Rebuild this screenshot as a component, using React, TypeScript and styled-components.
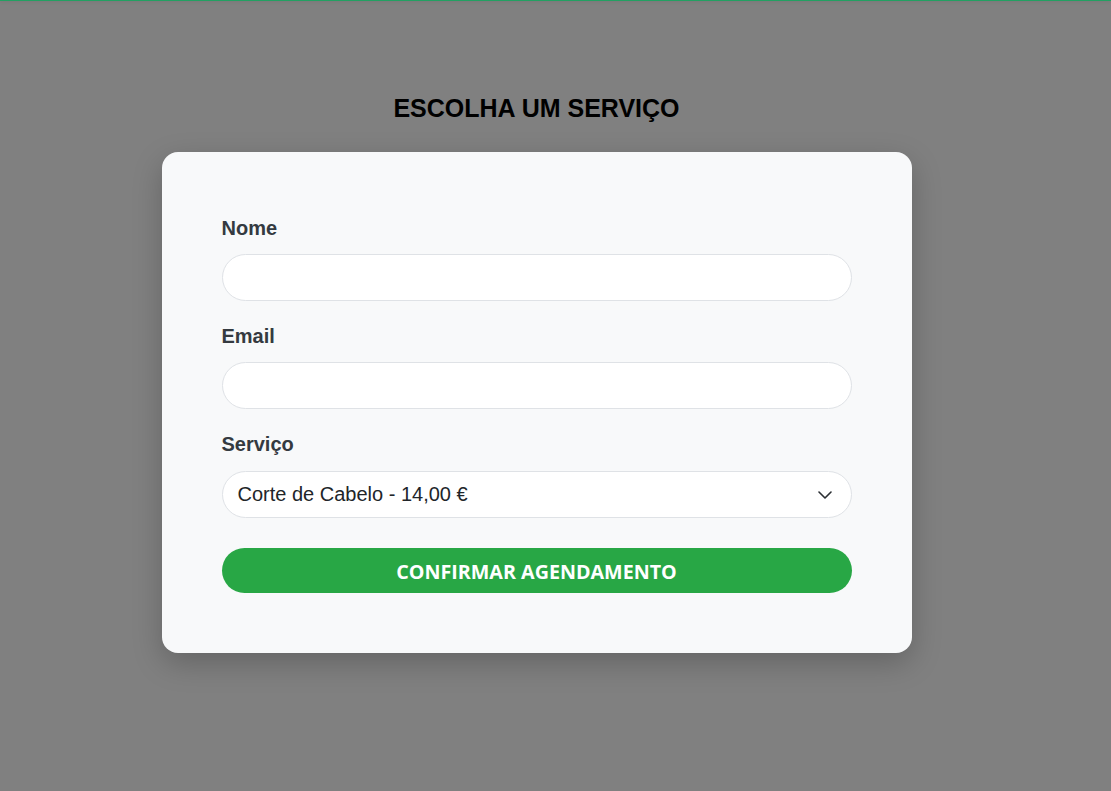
import React from "react";
import styled, { createGlobalStyle } from "styled-components";

const Global = createGlobalStyle`
  html, body { margin: 0; padding: 0; }
  body {
    background: #808080;
    font-family: "Liberation Sans", Arial, sans-serif;
    min-height: 791px;
  }
  * { box-sizing: border-box; }
`;

const TopLine = styled.div`
  height: 1px;
  background: #22a062;
  box-shadow: 0 1px 3px rgba(0, 0, 0, 0.12);
`;

const Page = styled.main`
  display: flex;
  flex-direction: column;
  align-items: center;
  padding-top: 93px;
  padding-right: 38px;
`;

const Title = styled.h2`
  margin: 0 0 30px;
  font-size: 25px;
  line-height: 28px;
  font-weight: 700;
  color: #000;
`;

const Card = styled.form`
  width: 750px;
  background: #f8f9fa;
  border-radius: 16px;
  padding: 64px 60px 60px;
  box-shadow: 0 10px 30px rgba(0, 0, 0, 0.22);
  display: flex;
  flex-direction: column;
  gap: 23px;
`;

const Field = styled.div`
  display: flex;
  flex-direction: column;
`;

const Label = styled.label`
  font-size: 20px;
  line-height: 24px;
  font-weight: 700;
  color: #343a40;
  margin-bottom: 14px;
`;

const Input = styled.input`
  height: 47px;
  width: 100%;
  border: 1px solid #dfe2e6;
  border-radius: 24px;
  background: #fff;
  padding: 0 16px;
  font-family: "Liberation Sans", Arial, sans-serif;
  font-size: 20px;
  color: #212529;
  outline: none;
`;

const SelectBox = styled.div`
  position: relative;
  height: 47px;
  margin-top: 1px;
  border: 1px solid #dfe2e6;
  border-radius: 24px;
  background: #fff;
  display: flex;
  align-items: center;
  justify-content: space-between;
  padding: 0 19px 0 15px;
  font-size: 20px;
  color: #212529;
`;

const Chevron = styled.svg`
  width: 14px;
  height: 8px;
  display: block;
`;

const Button = styled.button`
  margin-top: 7px;
  height: 45px;
  border: none;
  border-radius: 23px;
  background: #28a745;
  color: #fff;
  font-family: "Open Sans", "Segoe UI", sans-serif;
  font-weight: 700;
  font-size: 19.7px;
  padding-top: 2px;
  cursor: pointer;
`;

export default function App() {
  return (
    <>
      <Global />
      <TopLine />
      <Page>
        <Title>ESCOLHA UM SERVIÇO</Title>
        <Card onSubmit={(e) => e.preventDefault()}>
          <Field>
            <Label>Nome</Label>
            <Input type="text" />
          </Field>
          <Field>
            <Label>Email</Label>
            <Input type="email" />
          </Field>
          <Field>
            <Label>Serviço</Label>
            <SelectBox>
              <span>Corte de Cabelo - 14,00 €</span>
              <Chevron viewBox="0 0 14 8" fill="none">
                <polyline
                  points="1,1 7,7 13,1"
                  stroke="#2b2f33"
                  strokeWidth="1.6"
                  strokeLinecap="round"
                  strokeLinejoin="round"
                />
              </Chevron>
            </SelectBox>
          </Field>
          <Button type="submit">CONFIRMAR AGENDAMENTO</Button>
        </Card>
      </Page>
    </>
  );
}
